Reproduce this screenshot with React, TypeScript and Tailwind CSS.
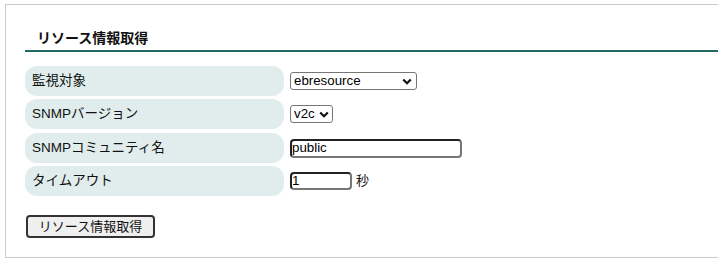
import React from "react";

const font = { fontFamily: '"Liberation Sans", Arial, "Noto Sans CJK JP", sans-serif' };

function Chevron() {
  return (
    <svg width="10" height="7" viewBox="0 0 10 7" className="shrink-0">
      <path d="M1.2 1.5 L5 5.2 L8.8 1.5" fill="none" stroke="#111" strokeWidth="2.2" />
    </svg>
  );
}

function Row({ label, children }: { label: string; children: React.ReactNode }) {
  return (
    <div className="flex items-center h-[30px]">
      <div className="w-[259px] h-full rounded-[12px] bg-[#e0edec] flex items-center pl-[7px] text-[13.5px] text-[#111]">
        {label}
      </div>
      <div className="pl-[6px] flex items-center">{children}</div>
    </div>
  );
}

export default function App() {
  return (
    <div className="pt-[4px] pl-[5px] bg-white w-[718px] h-[263px] overflow-hidden" style={font}>
      <div className="border border-[#cccccc] border-r-0 h-[254px] pl-[19px] pt-[22px]">
        <div className="border-b-2 border-[#216b63] h-[25px] pl-[12px] text-[14px] font-bold text-[#111] leading-[18px] pt-[2px]">
          リソース情報取得
        </div>
        <div className="mt-[14px] flex flex-col gap-[3px]">
          <Row label="監視対象">
            <div className="w-[127px] h-[18px] border border-[#767676] rounded-[3px] flex items-center justify-between pl-[3px] pr-[4px] text-[13.3px] text-black">
              <span>ebresource</span>
              <Chevron />
            </div>
          </Row>
          <Row label="SNMPバージョン">
            <div className="w-[43px] h-[18px] border border-[#767676] rounded-[3px] flex items-center justify-between pl-[3px] pr-[3px] text-[13.3px] text-black">
              <span>v2c</span>
              <Chevron />
            </div>
          </Row>
          <div className="h-[1px] -mt-[3px]" />
          <Row label="SNMPコミュニティ名">
            <div className="w-[172px] h-[19px] border-2 border-t-[#222] border-l-[#222] border-r-[#777] border-b-[#777] rounded-[4px] flex items-center pl-[0px] text-[13.3px] text-black">
              public
            </div>
          </Row>
          <Row label="タイムアウト">
            <div className="flex items-center">
              <div className="w-[62px] h-[18px] border-2 border-t-[#222] border-l-[#222] border-r-[#777] border-b-[#777] rounded-[4px] flex items-center text-[13.3px] text-black">
                1
              </div>
              <span className="ml-[4px] text-[13px] text-[#111]">秒</span>
            </div>
          </Row>
        </div>
        <div className="mt-[19px] pl-[1px]">
          <button className="w-[129px] h-[23px] border-2 border-[#333] rounded-[4px] bg-[#efefef] text-[13px] text-[#111] flex items-center justify-center" style={font}>
            リソース情報取得
          </button>
        </div>
      </div>
    </div>
  );
}
